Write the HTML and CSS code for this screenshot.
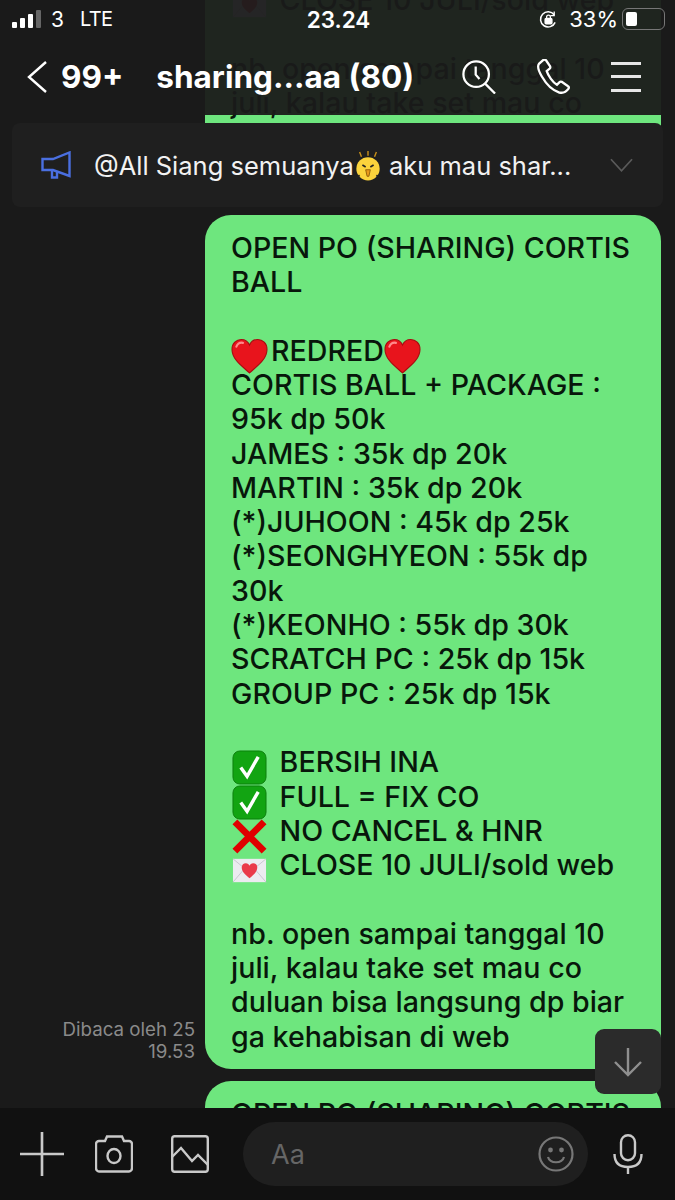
FILE: index.html
```html
<!DOCTYPE html>
<html lang="en">
<head>
    <meta charset="UTF-8">
    <meta name="viewport" content="width=device-width, initial-scale=1.0">
    <title>sharing...aa (80)</title>
    <link rel="stylesheet" href="styles.css">
</head>
<body>
<svg class="defs">
    <defs>
        <symbol id="heart" viewBox="1.500 2 33 32">
            <path d="M18 33C10 26 2 20 2 11.500C2 6 6 2.500 10.500 2.500C14 2.500 16.700 4.500 18 7.500C19.300 4.500 22 2.500 25.500 2.500C30 2.500 34 6 34 11.500C34 20 26 26 18 33Z" fill="#e8141c" stroke="#a80c10" stroke-width="1"/>
            <path d="M6 9C7 6.500 9.500 5 12 5.500" fill="none" stroke="#ff8a8a" stroke-width="2" stroke-linecap="round"/>
        </symbol>
        <symbol id="check" viewBox="0 0 36 36">
            <rect x="1" y="1" width="34" height="34" rx="7" fill="#12a412" stroke="#0c7f0c"/>
            <path d="M9 18L15.500 27L27 7" fill="none" stroke="#fff" stroke-width="3.500"/>
        </symbol>
        <symbol id="cross" viewBox="0 0 36 36">
            <path d="M3 3L33 33M33 3L3 33" stroke="#e00000" stroke-width="7"/>
        </symbol>
        <symbol id="letter" viewBox="0 0 36 36">
            <rect x="1" y="6" width="34" height="24" fill="#ecebf0"/>
            <path d="M1 6L18 20L35 6M1 30L13 16M35 30L23 16" fill="none" stroke="#c8c6d0"/>
            <path d="M18 26C14 22.500 10 19.500 10 15C10 12 12 10.500 14.200 10.500C16 10.500 17.400 11.500 18 13C18.600 11.500 20 10.500 21.800 10.500C24 10.500 26 12 26 15C26 19.500 22 22.500 18 26Z" fill="#ea3a4a"/>
        </symbol>
    </defs>
</svg>

<main class="chat">
    <div class="row">
        <div class="bubble bubble-prev">
            <svg class="emoji"><use href="#letter"/></svg> CLOSE 10 JULI/sold web<br>
            <br>
            nb. open sampai tanggal 10<br>
            juli, kalau take set mau co<br>
            duluan bisa langsung dp biar<br>
            ga kehabisan di web
        </div>
    </div>

    <div class="row">
        <div class="read-info">Dibaca oleh 25<br>19.53</div>
        <div class="bubble">
            OPEN PO (SHARING) CORTIS<br>
            BALL<br>
            <br>
            <svg class="emoji emoji-heart"><use href="#heart"/></svg>REDRED<svg class="emoji emoji-heart"><use href="#heart"/></svg><br>
            CORTIS BALL + PACKAGE :<br>
            95k dp 50k<br>
            JAMES : 35k dp 20k<br>
            MARTIN : 35k dp 20k<br>
            (*)JUHOON : 45k dp 25k<br>
            (*)SEONGHYEON : 55k dp<br>
            30k<br>
            (*)KEONHO : 55k dp 30k<br>
            SCRATCH PC : 25k dp 15k<br>
            GROUP PC : 25k dp 15k<br>
            <br>
            <svg class="emoji"><use href="#check"/></svg> BERSIH INA<br>
            <svg class="emoji"><use href="#check"/></svg> FULL = FIX CO<br>
            <svg class="emoji"><use href="#cross"/></svg> NO CANCEL &amp; HNR<br>
            <svg class="emoji"><use href="#letter"/></svg> CLOSE 10 JULI/sold web<br>
            <br>
            nb. open sampai tanggal 10<br>
            juli, kalau take set mau co<br>
            duluan bisa langsung dp biar<br>
            ga kehabisan di web
        </div>
    </div>

    <div class="row">
        <div class="bubble">OPEN PO (SHARING) CORTIS</div>
    </div>
</main>

<div class="top">
    <div class="status">
        <div class="status-left">
            <span class="signal"><i></i><i></i><i></i><i class="off"></i></span>
            <span>3</span>
            <span class="lte">LTE</span>
        </div>
        <div class="clock">23.24</div>
        <div class="status-right">
            <svg class="lock" viewBox="0 0 20 20" fill="none" stroke="#fff" stroke-width="1.600">
                <path d="M17 13A8 8 0 1 1 16 5"/>
                <path d="M16 1.500V6H12" stroke-width="1.400"/>
                <rect x="6.500" y="9" width="7" height="5.500" rx="1" fill="#fff"/>
                <path d="M8 9V7.500A2 2 0 0 1 12 7.500V9" stroke-width="1.300"/>
            </svg>
            <span>33%</span>
            <span class="battery"><i></i></span>
        </div>
    </div>
    <header class="header">
        <svg class="back" viewBox="0 0 20 32" fill="none" stroke="#fff" stroke-width="2.400"><path d="M19 1L2 16L19 31"/></svg>
        <span class="count">99+</span>
        <span class="name">sharing...aa (80)</span>
        <div class="actions">
            <svg class="act-search" viewBox="0 0 36 36" fill="none" stroke="#fff" stroke-width="2.400">
                <circle cx="15" cy="15" r="13.500"/>
                <path d="M24.500 25L35 35.500M14.500 7V15.500L18.500 20"/>
            </svg>
            <svg class="act-call" viewBox="0 0 34 36" fill="none" stroke="#fff" stroke-width="2.400">
                <path d="M6 1.500L2 5C0.500 7 1.500 12 5 18C9 25 15 32 23 34.500C27 35.500 30 34 32.500 30.500C33 29.500 32.800 28.500 32 28L25.500 23.500C24.500 23 23.800 23.200 23 24L20.500 26.500C16 24 11.500 17 10 12.500L13 10C13.800 9.300 13.900 8.500 13.500 7.500L9.500 1.500C8.500 0.500 7 0.500 6 1.500Z"/>
            </svg>
            <div class="menu"><i></i><i></i><i></i></div>
        </div>
    </header>
    <div class="notice">
        <svg class="horn" viewBox="0 0 30 28" fill="none" stroke="#4a6fe0" stroke-width="2.400">
            <path d="M1.500 8H12L28.500 1.500V25L12 19H1.500Z"/>
            <path d="M11 19.500V26.500H16V21"/>
        </svg>
        <div class="notice-text">
            @All Siang semuanya<svg class="chick" viewBox="0 0 30 32">
                <path d="M8 6L6 1M15 5V0M22 6L24 1" stroke="#c8901a" stroke-width="1.500"/>
                <circle cx="15" cy="19" r="12.500" fill="#fbd33c"/>
                <path d="M9 15L12.500 17M21 15L17.500 17" stroke="#222" stroke-width="1.800"/>
                <path d="M12.500 20H17.500L16 27H14Z" fill="#e89a1c" stroke="#7a4a00" stroke-width="0.800"/>
                <path d="M2 29L6 26M28 29L24 26" stroke="#222" stroke-width="2"/>
            </svg> aku mau shar...
        </div>
        <svg class="notice-arrow" viewBox="0 0 24 14" fill="none" stroke="#5a5a5a" stroke-width="1.800"><path d="M1 1L12 13L23 1"/></svg>
    </div>
</div>

<button class="to-bottom">
    <svg viewBox="0 0 30 30" fill="none" stroke="#8f8f8f" stroke-width="2.400"><path d="M15 1V28M2 15L15 28L28 15"/></svg>
</button>

<footer class="composer">
    <svg class="plus" viewBox="0 0 40 40" fill="none" stroke="#c9c9c9" stroke-width="2.400"><path d="M20 0V40M0 20H40"/></svg>
    <svg class="camera" viewBox="0 0 38 38" fill="none" stroke="#c9c9c9" stroke-width="2.400">
        <path d="M4 6H10L12 1.500H27L29 6H34C35.500 6 37 7.500 37 9V33C37 35 35.500 36.500 34 36.500H4C2.500 36.500 1 35 1 33V9C1 7.500 2.500 6 4 6Z"/>
        <ellipse cx="19" cy="21" rx="6.500" ry="7"/>
    </svg>
    <svg class="picture" viewBox="0 0 38 38" fill="none" stroke="#c9c9c9" stroke-width="2.400">
        <rect x="1.200" y="1.200" width="35.600" height="35.600" rx="2.500"/>
        <path d="M1 22L10 13L21 26L27 20L37 30"/>
    </svg>
    <div class="input">
        <span class="placeholder">Aa</span>
        <svg class="smile" viewBox="0 0 36 36" fill="none" stroke="#777" stroke-width="2.200">
            <circle cx="18" cy="18" r="16.500"/>
            <path d="M10 21C12 28 24 28 26 21"/>
            <circle cx="12.500" cy="14" r="1.300" fill="#777"/>
            <circle cx="23.500" cy="14" r="1.300" fill="#777"/>
        </svg>
    </div>
    <svg class="mic" viewBox="0 0 30 40" fill="none" stroke="#c9c9c9" stroke-width="2.400">
        <rect x="8" y="1.200" width="14" height="25" rx="7"/>
        <path d="M1.500 20C1.500 29 7 33 15 33C23 33 28.500 29 28.500 20M15 33V40"/>
    </svg>
</footer>
</body>
</html>
```

FILE: styles.css
```css
* {
    box-sizing: border-box;
}
html, body {
    margin: 0;
    height: 1200px;
}
body {
    position: relative;
    width: 675px;
    overflow: hidden;
    background: #1a1a1a;
    font-family: Inter, "Liberation Sans", sans-serif;
    color: #fff;
}
.defs {
    display: none;
}

/* chat */
.chat {
    display: flex;
    flex-direction: column;
    gap: 12px;
    height: 1108px;
    overflow: hidden;
    padding-right: 14px;
}
.row {
    display: flex;
    justify-content: flex-end;
    align-items: flex-end;
    gap: 10px;
    flex: none;
}
.bubble {
    width: 456px;
    padding: 16px 10px 15px 26px;
    background: #6ee67e;
    border-radius: 26px;
    color: #08170b;
    font-size: 28.600px;
    font-weight: 500;
    line-height: 34.300px;
}
.bubble-prev {
    margin-top: -34px;
    padding-top: 17px;
    padding-bottom: 14px;
}
/* kept shorter than the line box so rows with an icon stay on the line pitch */
.emoji {
    width: 37px;
    height: 35px;
    margin: -6px 4px -6px 0;
    vertical-align: -7px;
}
.emoji-heart {
    margin-right: 3px;
}
.read-info {
    padding-bottom: 6px;
    text-align: right;
    font-size: 18.700px;
    line-height: 22px;
    color: #8a8a8a;
}

/* status bar, title and pinned notice float over the messages */
.top {
    position: absolute;
    top: 0;
    left: 0;
    width: 675px;
}
.status {
    display: flex;
    align-items: center;
    justify-content: space-between;
    height: 38px;
    padding: 0 10px 0 12px;
    background: rgba(26, 26, 26, 0.95);
    font-size: 21px;
}
.status-left, .status-right {
    display: flex;
    align-items: center;
    width: 240px;
}
.status-right {
    justify-content: flex-end;
    font-size: 22px;
}
.signal {
    display: flex;
    align-items: flex-end;
    gap: 3px;
    height: 18px;
    margin-right: 10px;
}
.signal i {
    width: 5px;
    background: #fff;
    border-radius: 1px;
}
.signal i:nth-child(1) { height: 6px; }
.signal i:nth-child(2) { height: 10px; }
.signal i:nth-child(3) { height: 14px; }
.signal i:nth-child(4) { height: 18px; }
.signal .off {
    background: #666;
}
.lte {
    margin-left: 16px;
    letter-spacing: -0.6px;
    font-size: 20px;
}
.clock {
    font-size: 22.500px;
    font-weight: 600;
}
.lock {
    width: 19px;
    height: 19px;
    margin-right: 11px;
}
.battery {
    width: 43px;
    height: 22px;
    margin-left: 4px;
    padding: 3px;
    border: 1.500px solid #777;
    border-radius: 6px;
}
.battery i {
    display: block;
    width: 11px;
    height: 100%;
    background: #fff;
    border-radius: 2px;
}
.header {
    display: flex;
    align-items: center;
    height: 77px;
    padding: 0 34px 0 27px;
    background: rgba(26, 26, 26, 0.95);
    font-size: 31.500px;
    font-weight: 700;
}
.back {
    width: 20px;
    height: 32px;
    margin-right: 14px;
}
.count {
    margin-right: 33px;
}
.actions {
    display: flex;
    align-items: center;
    margin-left: auto;
    gap: 41px;
}
.act-search {
    width: 34px;
    height: 34px;
}
.act-call {
    width: 33px;
    height: 35px;
}
.menu {
    display: flex;
    flex-direction: column;
    gap: 10.500px;
    width: 30px;
}
.menu i {
    height: 3px;
    background: #e6e6e6;
}
.notice {
    display: flex;
    align-items: center;
    height: 84px;
    margin: 8px 12px 0;
    padding: 0 30px 0 29px;
    background: #1f1f1f;
    border-radius: 8px;
}
.horn {
    width: 30px;
    height: 28px;
    margin-right: 23px;
}
.notice-text {
    flex: 1;
    font-size: 25.500px;
    color: #f2f2f2;
    white-space: nowrap;
}
.chick {
    width: 28px;
    height: 30px;
    vertical-align: -6px;
}
.notice-arrow {
    width: 23px;
    height: 14px;
}

.to-bottom {
    position: absolute;
    left: 595px;
    top: 1029px;
    display: flex;
    align-items: center;
    justify-content: center;
    width: 66px;
    height: 65px;
    padding: 0;
    border: none;
    border-radius: 9px;
    background: #2b2b2b;
}
.to-bottom svg {
    width: 30px;
    height: 30px;
}

/* bottom composer */
.composer {
    display: flex;
    align-items: center;
    height: 92px;
    padding: 0 31px 0 20px;
    background: #111;
}
.plus {
    width: 44px;
    height: 44px;
    margin-right: 31px;
}
.camera {
    width: 38px;
    height: 38px;
    margin-right: 38px;
}
.picture {
    width: 38px;
    height: 38px;
    margin-right: 34px;
}
.input {
    display: flex;
    align-items: center;
    justify-content: space-between;
    width: 345px;
    height: 64px;
    padding: 0 14px 0 28px;
    background: #1f1f1f;
    border-radius: 32px;
    margin-right: 25px;
}
.placeholder {
    font-size: 27px;
    color: #666;
}
.smile {
    width: 36px;
    height: 36px;
}
.mic {
    width: 30px;
    height: 40px;
}
```
